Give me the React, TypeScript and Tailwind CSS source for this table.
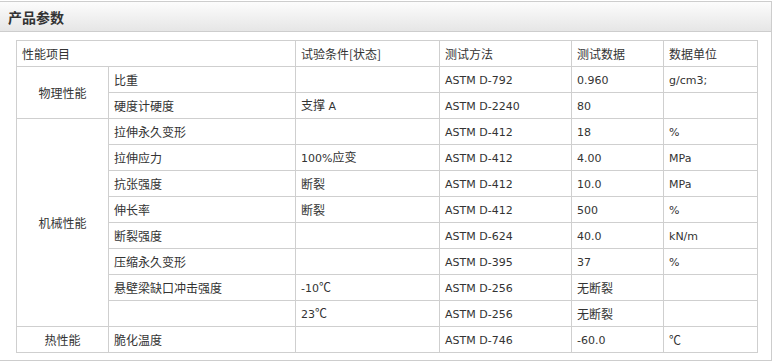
type Row = {
  group?: string;
  span?: number;
  item: string;
  cond: string;
  method: string;
  value: string;
  unit: string;
};

const rows: Row[] = [
  { group: "物理性能", span: 2, item: "比重", cond: "", method: "ASTM D-792", value: "0.960", unit: "g/cm3;" },
  { item: "硬度计硬度", cond: "支撑 A", method: "ASTM D-2240", value: "80", unit: "" },
  { group: "机械性能", span: 8, item: "拉伸永久变形", cond: "", method: "ASTM D-412", value: "18", unit: "%" },
  { item: "拉伸应力", cond: "100%应变", method: "ASTM D-412", value: "4.00", unit: "MPa" },
  { item: "抗张强度", cond: "断裂", method: "ASTM D-412", value: "10.0", unit: "MPa" },
  { item: "伸长率", cond: "断裂", method: "ASTM D-412", value: "500", unit: "%" },
  { item: "断裂强度", cond: "", method: "ASTM D-624", value: "40.0", unit: "kN/m" },
  { item: "压缩永久变形", cond: "", method: "ASTM D-395", value: "37", unit: "%" },
  { item: "悬壁梁缺口冲击强度", cond: "-10℃", method: "ASTM D-256", value: "无断裂", unit: "" },
  { item: "", cond: "23℃", method: "ASTM D-256", value: "无断裂", unit: "" },
  { group: "热性能", span: 1, item: "脆化温度", cond: "", method: "ASTM D-746", value: "-60.0", unit: "℃" },
];

// latin runs get the narrower tahoma-ish face, cjk keeps 12px
function Txt({ s }: { s: string }) {
  const parts = s.match(/[\x20-\x7e]+|[^\x20-\x7e]+/g) || [];
  return (
    <>
      {parts.map((p, i) =>
        /^[\x20-\x7e]+$/.test(p) ? (
          <span key={i} className="text-[11px] font-['DejaVu_Sans','Noto_Sans_CJK_SC',sans-serif]">
            {p}
          </span>
        ) : (
          <span key={i}>{p}</span>
        )
      )}
    </>
  );
}

const td = "border border-[#cfcfcf] h-[26px] px-[5px] py-0 align-middle whitespace-nowrap";

export default function App() {
  return (
    <div className="w-[774px] h-[362px] bg-white pt-px font-['Noto_Sans_CJK_SC',sans-serif] text-[12px] text-[#333]">
      <div className="w-[772px] h-[360px] border-y border-r border-[#cdcdcd]">
        <div className="h-[30px] border-b border-[#cdcdcd] bg-gradient-to-b from-[#fcfcfc] to-[#e6e6e6] pl-[8px] flex items-center">
          <span className="text-[14px] font-bold text-[#333] leading-none">产品参数</span>
        </div>
        <div className="pt-[8px] pl-[16px]">
          <table className="w-[741px] border-collapse table-fixed leading-none">
            <colgroup>
              <col className="w-[92px]" />
              <col className="w-[187px]" />
              <col className="w-[144px]" />
              <col className="w-[132px]" />
              <col className="w-[92px]" />
              <col className="w-[94px]" />
            </colgroup>
            <tbody>
              <tr>
                <td colSpan={2} className={td}>性能项目</td>
                <td className={td}>试验条件[状态]</td>
                <td className={td}>测试方法</td>
                <td className={td}>测试数据</td>
                <td className={td}>数据单位</td>
              </tr>
              {rows.map((r, i) => (
                <tr key={i}>
                  {r.group && (
                    <td rowSpan={r.span} className={td + " text-center"}>
                      {r.group}
                    </td>
                  )}
                  <td className={td}><Txt s={r.item} /></td>
                  <td className={td}><Txt s={r.cond} /></td>
                  <td className={td}><Txt s={r.method} /></td>
                  <td className={td}><Txt s={r.value} /></td>
                  <td className={td}><Txt s={r.unit} /></td>
                </tr>
              ))}
            </tbody>
          </table>
        </div>
      </div>
    </div>
  );
}
